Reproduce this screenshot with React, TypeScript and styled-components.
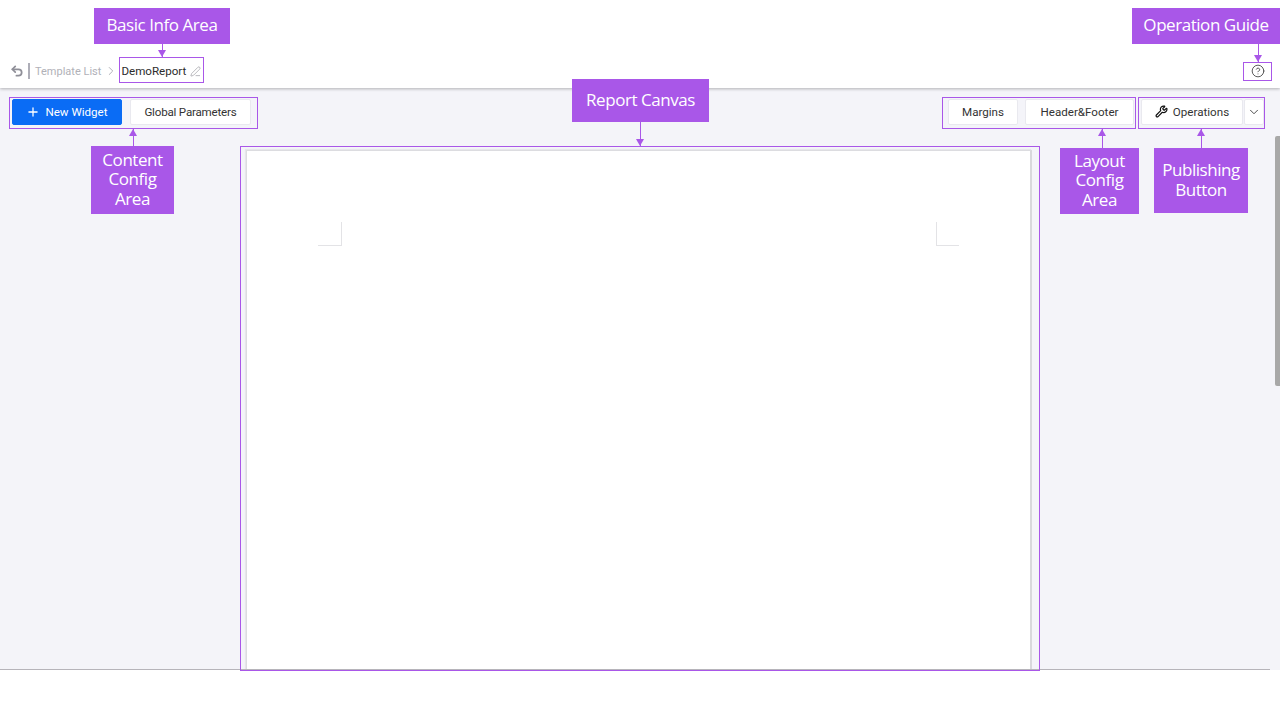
import React from "react";
import styled, { createGlobalStyle, css } from "styled-components";
import { ChevronDown, ChevronRight, CircleHelp, PenLine, Plus, Undo2, Wrench } from "lucide-react";

const PURPLE = "#a957e8";

const Global = createGlobalStyle`
  html, body { margin: 0; padding: 0; background: #fff; overflow: hidden; }
  #root { width: 1280px; height: 720px; }
  * { box-sizing: border-box; }
`;

const Screen = styled.div`
  position: relative;
  width: 1280px;
  height: 720px;
  overflow: hidden;
  background: #fff;
  font-family: Roboto, "Noto Sans", sans-serif;
  font-size: 12px;
  color: #333;
`;

const Shell = styled.div`
  width: 1280px;
  height: 670px;
  display: flex;
  flex-direction: column;
  background: #f4f4f9;
`;

const Header = styled.header`
  flex: none;
  height: 88px;
  display: flex;
  align-items: flex-end;
  justify-content: space-between;
  padding: 0 15px 5px 10px;
  background: #fff;
  box-shadow: 0 1px 3px rgba(0, 0, 0, 0.28);
`;

const Crumbs = styled.nav`
  height: 24px;
  display: flex;
  align-items: center;
`;

const BackDivider = styled.span`
  width: 2px;
  height: 16px;
  margin: 0 5px 0 4px;
  background: #aeaeb8;
`;

const CrumbLink = styled.span`
  color: #b1b1b8;
  font-size: 11px;
`;

const CrumbSeparator = styled.span`
  display: flex;
  margin: 0 3px 0 3px;
  color: #a6a6ae;
`;

const ReportName = styled.span`
  color: #2c2c2c;
  font-size: 11.6px;
  margin-right: 4px;
`;

const Guide = styled.span`
  height: 24px;
  display: flex;
  align-items: center;
  color: #444;
`;

const Toolbar = styled.div`
  flex: none;
  display: flex;
  justify-content: space-between;
  padding: 11px 16px 0 12px;
`;

const ButtonGroup = styled.div<{ $gap: number }>`
  display: flex;
  gap: ${(p) => p.$gap}px;
`;

const RightGroups = styled.div`
  display: flex;
  gap: 7px;
`;

const Button = styled.button<{ $primary?: boolean; $width: number; $tight?: boolean }>`
  width: ${(p) => p.$width}px;
  height: 26px;
  display: flex;
  align-items: center;
  justify-content: center;
  gap: 5px;
  padding: 0 0 1px;
  border-radius: 2px;
  border: 1px solid ${(p) => (p.$primary ? "#0a6cf5" : "#e9e9ef")};
  background: ${(p) => (p.$primary ? "#0a6cf5" : "#fff")};
  color: ${(p) => (p.$primary ? "#fff" : "#333")};
  font: inherit;
  font-size: 11.6px;
  letter-spacing: ${(p) => (p.$tight ? "-0.2px" : "0")};
`;

const SplitButton = styled.div`
  display: flex;
  gap: 1px;
`;

const Workspace = styled.main`
  flex: 1;
  min-height: 0;
  display: flex;
  justify-content: center;
  padding: 25px 2px 0 0;
  overflow: hidden;
`;

const Page = styled.section`
  width: 786px;
  height: 520px;
  display: flex;
  justify-content: space-between;
  align-items: flex-start;
  padding: 71px 71px 0 71px;
  background: #fff;
  border-top: 1px solid #dcdce0;
  border-left: 1px solid #dcdce0;
  border-right: 2px solid #d8d8dc;
  box-shadow: -1px -1px 1px #e6e6ea;
`;

const CornerMark = styled.span<{ $side: "left" | "right" }>`
  height: 24px;
  border-bottom: 1px solid #e3e3e6;
  ${(p) =>
    p.$side === "left"
      ? "width: 24px; border-right: 1px solid #e3e3e6;"
      : "width: 23px; border-left: 1px solid #e3e3e6;"}
`;

const BottomRule = styled.div`
  flex: none;
  width: 1270px;
  height: 1px;
  background: #b6b4ba;
`;

const ScrollThumb = styled.div`
  position: absolute;
  left: 1275px;
  top: 136px;
  width: 5px;
  height: 250px;
  border-radius: 2px 0 0 2px;
  background: #a8a8a8;
`;

type Rect = { $x: number; $y: number; $w: number; $h: number };

const placed = css<Rect>`
  position: absolute;
  left: ${(p) => p.$x}px;
  top: ${(p) => p.$y}px;
  width: ${(p) => p.$w}px;
  height: ${(p) => p.$h}px;
`;

const Highlight = styled.div<Rect>`
  ${placed}
  border: 1px solid ${PURPLE};
  pointer-events: none;
`;

const Label = styled.div<Rect>`
  ${placed}
  display: flex;
  align-items: center;
  justify-content: center;
  text-align: center;
  padding: 0 4px 2px;
  background: ${PURPLE};
  color: #fff;
  font-family: "Open Sans", "Noto Sans", sans-serif;
  font-size: 17px;
  line-height: 19.5px;
  letter-spacing: -0.45px;
`;

const ArrowStem = styled.div<{ $x: number; $y: number; $h: number }>`
  position: absolute;
  left: ${(p) => p.$x}px;
  top: ${(p) => p.$y}px;
  width: 1px;
  height: ${(p) => p.$h}px;
  background: ${PURPLE};
`;

const ArrowHead = styled.div<{ $x: number; $y: number; $up?: boolean }>`
  position: absolute;
  left: ${(p) => p.$x - 4}px;
  top: ${(p) => p.$y}px;
  width: 0;
  height: 0;
  border-left: 4.5px solid transparent;
  border-right: 4.5px solid transparent;
  ${(p) => (p.$up ? `border-bottom: 7px solid ${PURPLE};` : `border-top: 7px solid ${PURPLE};`)}
`;

const callouts = [
  { text: "Basic Info Area", x: 94, y: 8, w: 136, h: 36, ax: 162, ay: 44, ah: 13, up: false },
  { text: "Operation Guide", x: 1132, y: 8, w: 148, h: 36, ax: 1258, ay: 44, ah: 18, up: false },
  { text: "Report Canvas", x: 572, y: 79, w: 137, h: 43, ax: 640, ay: 122, ah: 24, up: false },
  { text: "Content Config Area", x: 91, y: 146, w: 83, h: 68, ax: 133, ay: 129, ah: 17, up: true },
  { text: "Layout Config Area", x: 1060, y: 148, w: 79, h: 66, ax: 1102, ay: 129, ah: 19, up: true },
  { text: "Publishing Button", x: 1154, y: 148, w: 94, h: 65, ax: 1201, ay: 129, ah: 19, up: true },
];

const highlights = [
  { x: 119, y: 57, w: 85, h: 26 },
  { x: 1243, y: 62, w: 29, h: 19 },
  { x: 9, y: 97, w: 249, h: 32 },
  { x: 942, y: 97, w: 194, h: 32 },
  { x: 1138, y: 97, w: 127, h: 32 },
  { x: 240, y: 146, w: 800, h: 525 },
];

export default function App() {
  return (
    <Screen>
      <Global />
      <Shell>
        <Header>
          <Crumbs>
            <Undo2 size={14} color="#8f8f98" strokeWidth={3} />
            <BackDivider />
            <CrumbLink>Template List</CrumbLink>
            <CrumbSeparator>
              <ChevronRight size={14} strokeWidth={1.5} />
            </CrumbSeparator>
            <ReportName>DemoReport</ReportName>
            <PenLine size={11} color="#9a9aa2" strokeWidth={1.5} />
          </Crumbs>
          <Guide>
            <CircleHelp size={14} strokeWidth={1.5} />
          </Guide>
        </Header>
        <Toolbar>
          <ButtonGroup $gap={8}>
            <Button $primary $width={110}>
              <Plus size={14} strokeWidth={2.2} />
              New Widget
            </Button>
            <Button $width={121} $tight>
              Global Parameters
            </Button>
          </ButtonGroup>
          <RightGroups>
            <ButtonGroup $gap={7}>
              <Button $width={70}>Margins</Button>
              <Button $width={109}>Header&amp;Footer</Button>
            </ButtonGroup>
            <SplitButton>
              <Button $width={102}>
                <Wrench size={13} color="#111" strokeWidth={2.2} />
                Operations
              </Button>
              <Button $width={20}>
                <ChevronDown size={14} strokeWidth={1.5} />
              </Button>
            </SplitButton>
          </RightGroups>
        </Toolbar>
        <Workspace>
          <Page>
            <CornerMark $side="left" />
            <CornerMark $side="right" />
          </Page>
        </Workspace>
        <BottomRule />
      </Shell>
      <ScrollThumb />
      {highlights.map((b) => (
        <Highlight key={`${b.x}-${b.y}`} $x={b.x} $y={b.y} $w={b.w} $h={b.h} />
      ))}
      {callouts.map((c) => (
        <React.Fragment key={c.text}>
          <Label $x={c.x} $y={c.y} $w={c.w} $h={c.h}>
            {c.text}
          </Label>
          <ArrowStem $x={c.ax} $y={c.ay} $h={c.ah} />
          <ArrowHead $x={c.ax} $y={c.up ? c.ay : c.ay + c.ah - 7} $up={c.up} />
        </React.Fragment>
      ))}
    </Screen>
  );
}
